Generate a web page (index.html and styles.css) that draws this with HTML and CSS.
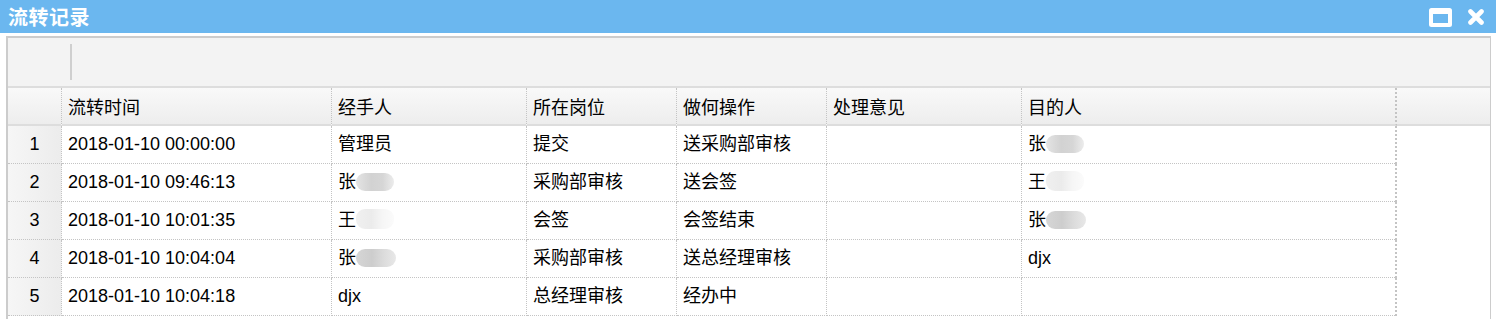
FILE: index.html
```html
<!DOCTYPE html>
<html lang="zh-CN">
<head>
<meta charset="utf-8">
<title>流转记录</title>
<link rel="stylesheet" href="styles.css">
</head>
<body>
<div class="win">
  <div class="titlebar">
    <span class="title">流转记录</span>
    <div class="tools">
      <svg class="ic-max" width="23" height="19" viewBox="0 0 23 19"><path fill="#fff" fill-rule="evenodd" d="M2.5 0h18a2.5 2.5 0 0 1 2.5 2.5v14a2.5 2.5 0 0 1-2.5 2.5h-18A2.5 2.5 0 0 1 0 16.5v-14A2.5 2.5 0 0 1 2.5 0zM4 6v9h15V6z"/></svg>
      <svg class="ic-close" width="16" height="16" viewBox="0 0 16 16"><path d="M2.5 2.5l11 11M13.5 2.5l-11 11" stroke="#fff" stroke-width="4.6" stroke-linecap="round"/></svg>
    </div>
  </div>
  <div class="panel">
    <div class="toolbar"><span class="sep"></span></div>
    <table class="grid">
      <colgroup>
        <col class="c-num"><col class="c1"><col class="c2"><col class="c3"><col class="c4"><col class="c5"><col class="c6"><col>
      </colgroup>
      <thead>
        <tr>
          <th class="num"></th>
          <th>流转时间</th>
          <th>经手人</th>
          <th>所在岗位</th>
          <th>做何操作</th>
          <th>处理意见</th>
          <th>目的人</th>
          <th class="fill"></th>
        </tr>
      </thead>
      <tbody>
        <tr>
          <td class="num">1</td>
          <td>2018-01-10 00:00:00</td>
          <td>管理员</td>
          <td>提交</td>
          <td>送采购部审核</td>
          <td></td>
          <td>张<span class="blob b-mid"></span></td>
          <td class="fill"></td>
        </tr>
        <tr>
          <td class="num">2</td>
          <td>2018-01-10 09:46:13</td>
          <td>张<span class="blob b-mid"></span></td>
          <td>采购部审核</td>
          <td>送会签</td>
          <td></td>
          <td>王<span class="blob b-light"></span></td>
          <td class="fill"></td>
        </tr>
        <tr>
          <td class="num">3</td>
          <td>2018-01-10 10:01:35</td>
          <td>王<span class="blob b-light"></span></td>
          <td>会签</td>
          <td>会签结束</td>
          <td></td>
          <td>张<span class="blob b-dark"></span></td>
          <td class="fill"></td>
        </tr>
        <tr>
          <td class="num">4</td>
          <td>2018-01-10 10:04:04</td>
          <td>张<span class="blob b-dark"></span></td>
          <td>采购部审核</td>
          <td>送总经理审核</td>
          <td></td>
          <td>djx</td>
          <td class="fill"></td>
        </tr>
        <tr>
          <td class="num">5</td>
          <td>2018-01-10 10:04:18</td>
          <td>djx</td>
          <td>总经理审核</td>
          <td>经办中</td>
          <td></td>
          <td></td>
          <td class="fill"></td>
        </tr>
      </tbody>
    </table>
  </div>
</div>
</body>
</html>
```
FILE: styles.css
```css
html, body {
  margin: 0;
  padding: 0;
  background: #fff;
}
body {
  font-family: "Liberation Sans", Arial, "Noto Sans CJK SC", sans-serif;
  font-size: 18px;
  color: #000;
  overflow: hidden;
}
.win {
  width: 1496px;
  height: 320px;
}
.titlebar {
  height: 33px;
  background: #6bb7ef;
  display: flex;
  align-items: center;
  justify-content: space-between;
  padding: 0 12px 0 8px;
}
.title {
  color: #fff;
  font-family: "Noto Sans CJK SC", sans-serif;
  font-weight: 700;
  font-size: 20px;
  line-height: 33px;
  letter-spacing: 0.5px;
}
.tools {
  display: flex;
  align-items: center;
  gap: 16px;
  padding-top: 1px;
}
.ic-max { display: block; }
.ic-close { display: block; }

.panel {
  margin: 3px 5px 0 6px;
  border: 1px solid #cccccc;
  border-left-width: 2px;
  border-top-width: 2px;
  border-bottom: none;
  height: 281px;
  overflow: hidden;
}
.toolbar {
  height: 48px;
  background: #f3f3f3;
  border-bottom: 2px solid #dddddd;
  display: flex;
  align-items: center;
  padding-left: 62px;
}
.sep {
  width: 2px;
  height: 36px;
  background: #cfcfcf;
}
.grid {
  width: 100%;
  border-collapse: separate;
  border-spacing: 0;
  table-layout: fixed;
}
.c-num { width: 54px; }
.c1 { width: 270px; }
.c2 { width: 195px; }
.c3 { width: 150px; }
.c4 { width: 150px; }
.c5 { width: 195px; }
.c6 { width: 375px; }

.grid th {
  height: 36px;
  padding: 0 0 0 6px;
  text-align: left;
  font-weight: 400;
  background: linear-gradient(#f9f9f9, #ededed);
  border-bottom: 2px solid #dddddd;
  border-right: 1px dotted #c4c4c4;
  white-space: nowrap;
  vertical-align: middle;
}
.grid th.fill { border-right: none; }
.grid td {
  height: 35px;
  padding: 0 0 2px 6px;
  border-bottom: 1px dotted #c4c4c4;
  border-right: 1px dotted #c4c4c4;
  white-space: nowrap;
  vertical-align: middle;
  line-height: 20px;
}
.grid td.num {
  text-align: center;
  padding-left: 0;
  background: linear-gradient(90deg, #f6f6f6, #ececec);
}
.grid td.fill {
  border: none;
}
.grid td:nth-child(7) { border-right-width: 2px; }
.grid th:nth-child(7) { border-right-width: 2px; }

.blob {
  display: inline-block;
  width: 38px;
  height: 18px;
  vertical-align: -3px;
  border-radius: 9px;
  filter: blur(0.6px);
}
.b-mid { background: linear-gradient(90deg, #e4e4e4, #d2d2d2 40%, #d6d6d6 70%, #ececec); }
.b-light { background: linear-gradient(90deg, #f0f0f0, #ebebeb 40%, #f6f6f6 70%, #fbfbfb); height: 20px; }
.b-dark { width: 40px; background: linear-gradient(90deg, #d6d6d6, #cdcdcd 40%, #dcdcdc 70%, #e8e8e8); }
```
